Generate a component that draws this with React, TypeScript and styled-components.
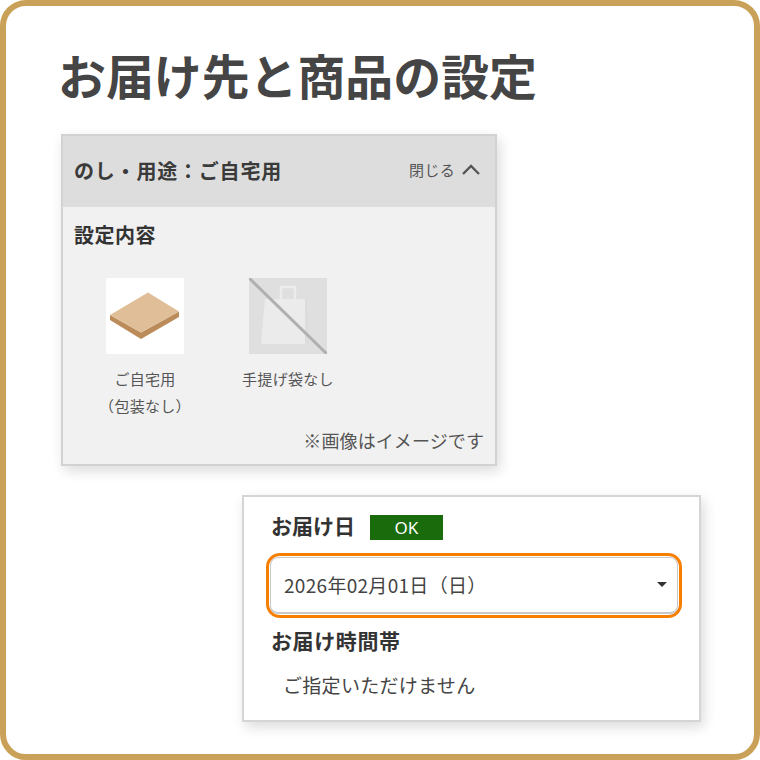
import React from 'react';
import styled, { createGlobalStyle } from 'styled-components';

const GlobalStyle = createGlobalStyle`
    html, body {
        margin: 0;
        padding: 0;
        background: #ffffff;
    }
    body {
        font-family: "Noto Sans CJK JP", "Noto Sans", sans-serif;
    }
`;

const Frame = styled.div`
    box-sizing: border-box;
    width: 760px;
    height: 760px;
    padding: 39px 0 0 55px;
    background: #ffffff;
    border: 6px solid #c9a158;
    border-radius: 26px;
    overflow: hidden;
`;

const Title = styled.h1`
    margin: 0 0 31px -3px;
    color: #454545;
    font-size: 47.9px;
    font-weight: 700;
    line-height: 58px;
    white-space: nowrap;
`;

const Panel = styled.section`
    box-sizing: border-box;
    width: 436px;
    height: 332px;
    display: flex;
    flex-direction: column;
    background: #f1f1f1;
    border: 2px solid #d2d2d2;
    box-shadow: 3px 5px 12px rgba(0, 0, 0, 0.14);
`;

const PanelHeader = styled.header`
    box-sizing: border-box;
    height: 71px;
    flex: none;
    display: flex;
    align-items: center;
    justify-content: space-between;
    padding: 0 15px 3px 11px;
    background: #dddddd;
`;

const PanelTitle = styled.span`
    color: #3a3a3a;
    font-size: 20px;
    font-weight: 700;
    letter-spacing: 0.8px;
    white-space: nowrap;
`;

const Toggle = styled.span`
    display: flex;
    align-items: center;
    gap: 7px;
    padding-bottom: 1px;
    color: #555555;
    font-size: 15px;
    letter-spacing: 0.3px;
`;

const PanelBody = styled.div`
    flex: 1;
    display: flex;
    flex-direction: column;
    padding: 15px 11px 0;
`;

const SectionLabel = styled.h2`
    margin: 0;
    color: #333333;
    font-size: 20px;
    font-weight: 700;
    line-height: 26px;
    letter-spacing: 0.5px;
`;

const Items = styled.div`
    display: flex;
    gap: 43px;
    margin: 30px 0 0 21px;
`;

const Item = styled.div`
    width: 100px;
    display: flex;
    flex-direction: column;
    align-items: center;
`;

const Thumb = styled.div<{ $tone: string }>`
    width: 78px;
    height: 76px;
    background: ${(p) => p.$tone};
    svg {
        display: block;
    }
`;

const Caption = styled.div`
    margin-top: 11px;
    color: #555555;
    font-size: 15px;
    line-height: 27px;
    letter-spacing: 0.3px;
    text-align: center;
    white-space: nowrap;
`;

const Note = styled.div`
    margin-top: 9px;
    color: #555555;
    font-size: 18px;
    line-height: 24px;
    letter-spacing: 0.1px;
    text-align: right;
`;

const DeliveryCard = styled.section`
    box-sizing: border-box;
    width: 459px;
    height: 227px;
    margin: 29px 0 0 181px;
    padding: 16px 19px 0 27px;
    background: #ffffff;
    border: 2px solid #d5d5d5;
    box-shadow: 3px 5px 12px rgba(0, 0, 0, 0.14);
`;

const FieldRow = styled.div`
    display: flex;
    align-items: flex-start;
    gap: 15px;
    height: 28px;
`;

const FieldLabel = styled.span`
    color: #333333;
    font-size: 21px;
    font-weight: 700;
    line-height: 24px;
    white-space: nowrap;
`;

const Badge = styled.span`
    box-sizing: border-box;
    width: 73px;
    height: 25px;
    margin-top: 2px;
    display: flex;
    align-items: center;
    justify-content: center;
    background: #1a6b0c;
    color: #ffffff;
    font-family: "Noto Sans", sans-serif;
    font-size: 17px;
`;

const SelectFocus = styled.div`
    box-sizing: border-box;
    width: 416px;
    height: 65px;
    margin: 12px 0 0 -5px;
    padding: 1px;
    border: 3px solid #f77f00;
    border-radius: 14px;
`;

const SelectBox = styled.div`
    box-sizing: border-box;
    height: 100%;
    display: flex;
    align-items: center;
    justify-content: space-between;
    padding: 0 10px 2px 13px;
    border: 1px solid #c8c8c8;
    border-bottom-width: 2px;
    border-radius: 8px;
    color: #444444;
    font-size: 19px;
    letter-spacing: 0.3px;
`;

const Caret = styled.span`
    width: 0;
    height: 0;
    border-left: 5px solid transparent;
    border-right: 5px solid transparent;
    border-top: 5px solid #333333;
`;

const SecondLabel = styled(FieldLabel)`
    display: block;
    margin-top: 10px;
    letter-spacing: 0.6px;
`;

const PlainValue = styled.div`
    margin: 20px 0 0 12px;
    color: #444444;
    font-size: 19px;
    line-height: 26px;
    letter-spacing: 0.3px;
`;

const ChevronUp = () => (
    <svg width="18" height="11" viewBox="0 0 18 11" fill="none">
        <path d="M1 10L9 2l8 8" stroke="#555555" strokeWidth="2.4" />
    </svg>
);

const BoxImage = () => (
    <svg width="78" height="76" viewBox="0 0 78 76">
        <path d="M4 37V42L35 61L73 39V33.500L35 54.500Z" fill="#bb8c5a" />
        <path d="M4 37L42 14.500L73 33.500L35 54.500Z" fill="#dfbe98" />
    </svg>
);

const BagImage = () => (
    <svg width="78" height="76" viewBox="0 0 78 76">
        <path d="M32 21V9H46V21" fill="none" stroke="#ececec" strokeWidth="2.4" />
        <path d="M16 21H58L61 69L56 66H12Z" fill="#ebebeb" />
        <path d="M56 21H58L61 69L56 66Z" fill="#dcdcdc" />
        <path d="M0 0L78 76" stroke="#b0b0b0" strokeWidth="3" />
    </svg>
);

const App: React.FC = () => {
    return (
        <Frame>
            <GlobalStyle />
            <Title>お届け先と商品の設定</Title>
            <Panel>
                <PanelHeader>
                    <PanelTitle>のし・用途：ご自宅用</PanelTitle>
                    <Toggle>閉じる<ChevronUp /></Toggle>
                </PanelHeader>
                <PanelBody>
                    <SectionLabel>設定内容</SectionLabel>
                    <Items>
                        <Item>
                            <Thumb $tone="#ffffff"><BoxImage /></Thumb>
                            <Caption>ご自宅用<br />（包装なし）</Caption>
                        </Item>
                        <Item>
                            <Thumb $tone="#dfdfdf"><BagImage /></Thumb>
                            <Caption>手提げ袋なし</Caption>
                        </Item>
                    </Items>
                    <Note>※画像はイメージです</Note>
                </PanelBody>
            </Panel>
            <DeliveryCard>
                <FieldRow>
                    <FieldLabel>お届け日</FieldLabel>
                    <Badge>OK</Badge>
                </FieldRow>
                <SelectFocus>
                    <SelectBox>
                        <span>2026年02月01日（日）</span>
                        <Caret />
                    </SelectBox>
                </SelectFocus>
                <SecondLabel>お届け時間帯</SecondLabel>
                <PlainValue>ご指定いただけません</PlainValue>
            </DeliveryCard>
        </Frame>
    );
};

export default App;
